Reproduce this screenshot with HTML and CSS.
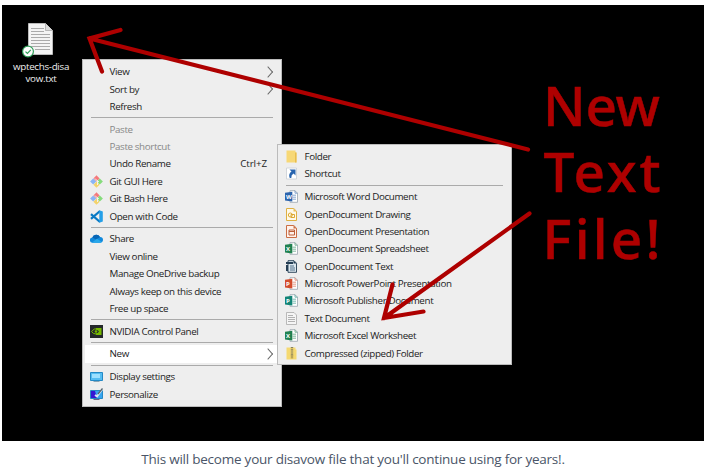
FILE: index.html
```html
<!DOCTYPE html>
<html lang="en">
<head>
    <meta charset="UTF-8">
    <meta name="viewport" content="width=device-width, initial-scale=1.0">
    <title>Disavow file</title>
    <link rel="stylesheet" href="styles.css">
</head>
<body>
    <!-- Shared icons -->
    <svg class="icon-defs" width="0" height="0">
        <symbol id="git" viewBox="0 0 13 13">
            <path d="M6.5 .2 9.6 3.4 6.5 6.5 3.4 3.4z" fill="#f5787b"/>
            <path d="M3.2 3.4 6.3 6.5 3.2 9.6 .1 6.5z" fill="#8ab4f5"/>
            <path d="M9.8 3.4 12.9 6.5 9.8 9.6 6.7 6.5z" fill="#86dc7c"/>
            <path d="M6.5 6.7 9.6 9.7 6.5 12.8 3.4 9.7z" fill="#f3d36b"/>
            <path d="M5 3.5 7.5 6v4M7 5.5l2 1.5" fill="none" stroke="#f4f1ee" stroke-width="1"/>
        </symbol>
        <symbol id="page" viewBox="0 0 13 13">
            <path d="M5 .7h5l2.5 2.5v9.1H5z" fill="#fff" stroke="#9aa5ad" stroke-width=".8"/>
            <path d="M10 .7v2.5h2.5M7.5 5.2H11M7.5 7.2H11M7.5 9.2H11" fill="none" stroke="currentColor" stroke-width=".8" opacity=".7"/>
            <path d="M0 2.7 7.3 1.8v9.6L0 10.5z" fill="currentColor"/>
        </symbol>
    </svg>

    <div class="desktop">
        <div class="file">
            <svg class="file-icon" viewBox="0 0 34 36">
                <path d="M7.5 1.5h17l7 7v24h-24z" fill="#f4f4f4" stroke="#bbb"/>
                <path d="M24.5 1.5v7h7" fill="#ddd" stroke="#aaa" stroke-width=".8"/>
                <path d="M10 6.5h13M10 9.5h13M10 12.5h19M10 15.5h19M10 18.5h19M10 21.5h19M10 24.5h19M14 27.5h15" stroke="#aaa"/>
                <circle cx="7" cy="29.5" r="5.4" fill="#fff" stroke="#2f9e58" stroke-width="1.2"/>
                <path d="m4.5 29.6 1.9 1.9 3.4-3.6" fill="none" stroke="#2f9e58" stroke-width="1.2"/>
            </svg>
            <span>wptechs-disa<br>vow.txt</span>
        </div>

        <!-- Context menu -->
        <ul class="menu main-menu">
            <li>View<span class="arrow"></span></li>
            <li>Sort by<span class="arrow"></span></li>
            <li>Refresh</li>
            <li class="line"></li>
            <li class="disabled">Paste</li>
            <li class="disabled">Paste shortcut</li>
            <li>Undo Rename<span class="key">Ctrl+Z</span></li>
            <li><svg class="icon"><use href="#git"/></svg>Git GUI Here</li>
            <li><svg class="icon"><use href="#git"/></svg>Git Bash Here</li>
            <li>
                <svg class="icon" viewBox="0 0 13 13">
                    <path d="M1 4.2 10 12M1 8.8 10 1" stroke="#0879c4" stroke-width="2.2"/>
                    <path d="M9.3.2 12.8 1.6v9.8L9.3 12.8z" fill="#249fe8"/>
                </svg>
                Open with Code
            </li>
            <li class="line"></li>
            <li>
                <svg class="icon" viewBox="0 0 13 13">
                    <path d="M2.7 10.7a2.6 2.6 0 0 1-.4-5.2A4.2 4.2 0 0 1 10 5a2.8 2.8 0 0 1 .3 5.7z" fill="#1189dc"/>
                    <path d="M2.3 5.5A4.2 4.2 0 0 1 10 5L6 7.5z" fill="#0865b5"/>
                    <path d="m2 10.4 5-3.6 5 3.2-1.7.7H2.7z" fill="#28a8ea"/>
                </svg>
                Share
            </li>
            <li>View online</li>
            <li>Manage OneDrive backup</li>
            <li>Always keep on this device</li>
            <li>Free up space</li>
            <li class="line"></li>
            <li>
                <svg class="icon" viewBox="0 0 13 13">
                    <path d="M0 0h13v13H0z" fill="#24282a"/>
                    <path d="M1.5 6.5Q4 3 7.5 3.8 10 4.5 10.5 6.5 8.5 9 6 9 3 9 1.5 6.5z" fill="none" stroke="#75b900"/>
                    <path d="M6 3h5.5v7H6V8.6q2-.3 3-2.1Q8 4.8 6 4.7z" fill="#75b900"/>
                    <circle cx="6" cy="6.5" r="1.3" fill="#75b900"/>
                </svg>
                NVIDIA Control Panel
            </li>
            <li class="line"></li>
            <li class="active">New<span class="arrow"></span></li>
            <li class="line"></li>
            <li>
                <svg class="icon" viewBox="0 0 13 13">
                    <path d="M.5 2.5h12v8H.5z" fill="#55bdf2" stroke="#2489c5"/>
                    <path d="M2 4h8v4H2z" fill="#9de0ff"/>
                    <path d="M3.5 11.5h6" stroke="#8ba5b6"/>
                </svg>
                Display settings
            </li>
            <li>
                <svg class="icon" viewBox="0 0 13 13">
                    <path d="M.5 2.5h12v8H.5z" fill="#36a5f0" stroke="#2489c5"/>
                    <path d="M1 3h4l2 7H1z" fill="#3417d3"/>
                    <path d="m5 7 2 1.5L12.5 1" fill="none" stroke="#dce7ef" stroke-width="1.8"/>
                    <path d="m8 6 4.5-5.5" stroke="#51616b" stroke-width="1.2"/>
                    <path d="M3.5 11.5h6" stroke="#668"/>
                </svg>
                Personalize
            </li>
        </ul>

        <!-- "New" submenu -->
        <ul class="menu sub-menu">
            <li>
                <svg class="icon" viewBox="0 0 13 13">
                    <path d="M1.5.5h9v2h1v10h-10z" fill="#f7d876"/>
                    <path d="M10 2.5h1.5v10H10z" fill="#e8bd4d"/>
                </svg>
                Folder
            </li>
            <li>
                <svg class="icon" viewBox="0 0 13 13">
                    <path d="M1.5 1h10v11h-10z" fill="#fff" stroke="#c9ced4" stroke-width=".8"/>
                    <path d="M4.5 2.5h6v6L8.6 6.6Q6 8 6.3 11H4.7Q3 7 6.5 4.5z" fill="#2864ae"/>
                </svg>
                Shortcut
            </li>
            <li class="line"></li>
            <li><svg class="icon word"><use href="#page"/></svg><span class="letter">W</span>Microsoft Word Document</li>
            <li>
                <svg class="icon" viewBox="0 0 13 13">
                    <path d="M1.5.5h7.3l2.7 2.7v9.3h-10z" fill="#fff9e7" stroke="#deb043"/>
                    <path d="M8.5.5v3h3" fill="#e7bf58"/>
                    <circle cx="5.3" cy="7" r="2" fill="none" stroke="#dda82f"/>
                    <path d="M6 6.5h3.5v3H6z" fill="none" stroke="#dda82f"/>
                </svg>
                OpenDocument Drawing
            </li>
            <li>
                <svg class="icon" viewBox="0 0 13 13">
                    <path d="M1.5.5h7.3l2.7 2.7v9.3h-10z" fill="#fff2eb" stroke="#ca6e45"/>
                    <path d="M8.5.5v3h3" fill="#ca6e45"/>
                    <path d="M4 5h5.5v5H4zM4 6.5h5" fill="none" stroke="#bd5f38"/>
                </svg>
                OpenDocument Presentation
            </li>
            <li><svg class="icon excel"><use href="#page"/></svg><span class="letter">X</span>OpenDocument Spreadsheet</li>
            <li>
                <svg class="icon" viewBox="0 0 13 13">
                    <path d="M3 .7h6l2.5 2.5v9.1H3z" fill="#dce8ef" stroke="#344c60"/>
                    <path d="M1 2h7v2H1zM1 5h2v6H1zM8.5.5v3h3" fill="#263f55"/>
                    <path d="M5 6h4M5 8h5M5 10h5" stroke="#52718a"/>
                </svg>
                OpenDocument Text
            </li>
            <li><svg class="icon powerpoint"><use href="#page"/></svg><span class="letter">P</span>Microsoft PowerPoint Presentation</li>
            <li><svg class="icon publisher"><use href="#page"/></svg><span class="letter">P</span>Microsoft Publisher Document</li>
            <li>
                <svg class="icon" viewBox="0 0 13 13">
                    <path d="M1.5.5H9l2.5 2.5v9.5h-10z" fill="#f5f5f5" stroke="#aaa" stroke-width=".8"/>
                    <path d="M3 3.5h5M3 5.5h7M3 7.5h7M3 9.5h7" stroke="#aaa" stroke-width=".9"/>
                </svg>
                Text Document
            </li>
            <li><svg class="icon excel"><use href="#page"/></svg><span class="letter">X</span>Microsoft Excel Worksheet</li>
            <li>
                <svg class="icon" viewBox="0 0 13 13">
                    <path d="M1.5.5h9v2h1v10h-10z" fill="#f5d971"/>
                    <path d="M7 0v9" stroke="#87805c" stroke-width="2.4" stroke-dasharray="1 .8"/>
                    <path d="M5.8 8h2.4v3.5H5.8z" fill="#bba65a"/>
                </svg>
                Compressed (zipped) Folder
            </li>
        </ul>

        <!-- Arrows and note -->
        <svg class="notes" viewBox="0 0 702 436">
            <path d="M526 144.5 87.5 33.5M118.5 25l-31 8.5 12.5 33"/>
            <path d="M527.5 208.5 382 313M390.5 279.5 382 313l39.5-6.5"/>
            <g class="note-text">
                <text x="541" y="120.5" textLength="117">New</text>
                <text x="541.5" y="187" textLength="117">Text</text>
                <text x="540.5" y="253.5" textLength="118">File!</text>
            </g>
        </svg>
    </div>
    <p class="caption">This will become your disavow file that you'll continue using for years!.</p>
</body>
</html>
```
FILE: styles.css
```css
body {
    margin: 0;
    padding: 5px 0 0 2px;
    background: #fff;
    font-family: "Open Sans", "Noto Sans", sans-serif;
    overflow: hidden;
}
.icon-defs {
    display: block;
}
.desktop {
    position: relative;
    width: 702px;
    height: 436px;
    background: #000;
}
.file {
    position: absolute;
    left: 4px;
    top: 17px;
    width: 70px;
    text-align: center;
    color: #eee;
    font-size: 9.8px;
    letter-spacing: -0.3px;
    line-height: 12px;
}
.file-icon {
    display: block;
    width: 34px;
    height: 36px;
    margin: 0 0 3px 15px;
}
.menu {
    position: absolute;
    box-sizing: border-box;
    margin: 0;
    padding: 3px 0;
    list-style: none;
    background: #eee;
    border: 1px solid #bbb;
    color: #222;
    font-size: 9.8px;
    letter-spacing: -0.37px;
}
.main-menu {
    left: 80px;
    top: 54px;
    width: 200px;
    height: 348px;
}
.sub-menu {
    left: 275px;
    top: 139px;
    width: 235px;
    height: 221px;
    padding-top: 2.8px;
}
.menu li {
    position: relative;
    display: flex;
    align-items: center;
    height: 17.4px;
    margin: 0 2px;
    padding-left: 24.5px;
    white-space: nowrap;
}
.menu .line {
    height: 5.35px;
    padding: 0;
}
.line::after {
    content: "";
    flex: 1;
    height: 1px;
    margin: 0 6px;
    background: #aaa;
}
.menu .disabled {
    color: #888;
}
.menu .active {
    background: #fff;
}
.icon {
    width: 13px;
    height: 13px;
    margin: 0 6.5px 0 -19.5px;
    flex: none;
}
.letter {
    position: absolute;
    left: 6px;
    color: #fff;
    font-size: 6px;
    font-weight: bold;
    letter-spacing: 0;
}
.word {
    color: #2b63ad;
}
.excel {
    color: #208150;
}
.powerpoint {
    color: #d34c2d;
}
.publisher {
    color: #128476;
}
.key {
    margin-left: auto;
    margin-right: 12px;
    letter-spacing: -0.1px;
}
.arrow {
    width: 7px;
    height: 7px;
    margin-left: auto;
    margin-right: 7px;
    border: solid #666;
    border-width: 1px 1px 0 0;
    transform: scaleX(0.9) rotate(45deg);
}
.notes {
    position: absolute;
    left: 0;
    top: 0;
    width: 702px;
    height: 436px;
}
.notes path {
    fill: none;
    stroke: #ae0000;
    stroke-width: 4.2;
    stroke-linecap: round;
}
.note-text {
    fill: #ae0000;
    stroke: #ae0000;
    stroke-width: 0.5;
    font-family: "Noto Sans", sans-serif;
    font-size: 55px;
    font-weight: 500;
}
.caption {
    width: 702px;
    margin: 8px 0 0;
    text-align: center;
    color: #4a5568;
    font-size: 13.5px;
    letter-spacing: -0.23px;
    line-height: 20px;
}
```
